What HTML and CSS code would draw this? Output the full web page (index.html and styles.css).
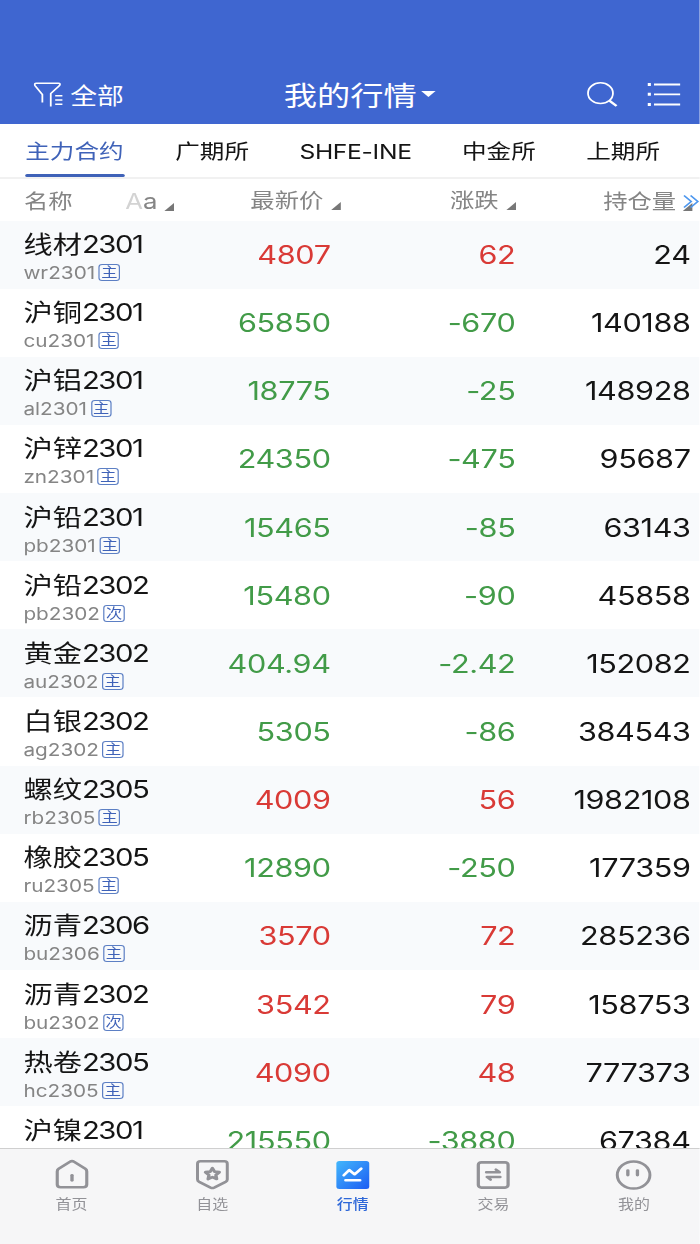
FILE: index.html
```
<!DOCTYPE html>
<html lang="zh-CN">
<head>
  <meta charset="UTF-8">
  <meta name="viewport" content="width=device-width, initial-scale=1.0">
  <title>我的行情</title>
  <link rel="stylesheet" href="styles.css">
</head>
<body>
  <div class="app">
    <header class="topbar">
      <div class="filter">
        <svg width="26" height="26" viewBox="0 0 26 26" fill="none" stroke="#fff" stroke-width="1.5">
          <path d="M7.3 21.5V13.5L1.2 4.6Q.2 2.3 2.4 2.3H20.6Q22.8 2.3 21.6 4.6L14.3 12.5V25.5M18 14.8H24M18 19H24M18 23.2H24"/>
        </svg>
        <span>全部</span>
      </div>
      <h1 class="title">我的行情<i class="caret"></i></h1>
      <div class="actions">
        <svg width="26" height="26" viewBox="0 0 26 26" fill="none" stroke="#fff" stroke-width="1.5">
          <circle cx="11.4" cy="12.2" r="10.4"/>
          <path d="M18.8 19.6L24.8 25" stroke-width="2.2"/>
        </svg>
        <svg width="28" height="26" viewBox="0 0 28 26" fill="none" stroke="#fff" stroke-width="1.8">
          <path d="M6 3.5H28M6 13.3H28M6 23.5H28"/>
          <path d="M.8 3.5H3.4M.8 13.3H3.4M.8 23.5H3.4" stroke-width="3"/>
        </svg>
      </div>
    </header>

    <nav class="tabs">
      <a class="tab active">主力合约</a>
      <a class="tab">广期所</a>
      <a class="tab latin">SHFE-INE</a>
      <a class="tab">中金所</a>
      <a class="tab">上期所</a>
    </nav>

    <div class="cols head">
      <div class="head-name">名称 <span class="aa"><b>A</b>a</span><i class="sort"></i></div>
      <div class="head-price">最新价<i class="sort"></i></div>
      <div>涨跌<i class="sort"></i></div>
      <div class="head-vol">持仓量
        <svg class="more" width="14" height="20" viewBox="0 0 14 20" fill="none">
          <path d="M8 11V19H0Z" fill="#777"/>
          <path d="M1 3.5L7 9.5L1 15.5M6.5 3.5L12.5 9.5L6.5 15.5" stroke="#4d97ee" stroke-width="1.5"/>
        </svg>
      </div>
    </div>

    <main class="list" id="list"></main>

    <footer class="navbar">
      <a class="nav-item">
        <svg width="30" height="34" viewBox="0 0 30 34" fill="none" stroke="#929297" stroke-width="2.6" stroke-linejoin="round" stroke-linecap="round">
          <path d="M13.3 3.8Q15 2.4 16.7 3.8L26.1 10.8Q27.3 11.8 27.3 13.5V26.5Q27.3 29.2 24.5 29.2H5.5Q2.7 29.2 2.7 26.5V13.5Q2.7 11.8 3.9 10.8Z"/>
          <path d="M15 17.3V22.3" stroke-width="2.8"/>
        </svg>
        <span>首页</span>
      </a>
      <a class="nav-item">
        <svg width="30" height="34" viewBox="0 0 30 34" fill="none" stroke="#929297" stroke-width="2.5" stroke-linejoin="round">
          <path d="M5 3.2H25Q27.4 3.2 27.4 5.7V21.5Q27.4 23 26 23.9L16.5 29.6Q15 30.4 13.5 29.6L4 23.9Q2.6 23 2.6 21.5V5.7Q2.6 3.2 5 3.2Z"/>
          <path d="M15 10.2L16.8 13.7L20.8 14.2L17.9 17L18.6 21L15 19.1L11.4 21L12.1 17L9.2 14.2L13.2 13.7Z" stroke-width="2.7"/>
        </svg>
        <span>自选</span>
      </a>
      <a class="nav-item current">
        <svg width="30" height="34" viewBox="0 0 30 34" fill="none">
          <defs>
            <linearGradient id="blue" x1="0" y1="0" x2="1" y2="1">
              <stop offset="0" stop-color="#42b7fc"/>
              <stop offset="1" stop-color="#1c5cf3"/>
            </linearGradient>
          </defs>
          <rect x="1.3" y="3" width="27.4" height="28" rx="2.5" fill="url(#blue)"/>
          <path d="M7.5 17.2L12 12L16.5 16.3L22 10.7M9 22.3H21" stroke="#fff" stroke-width="2.5" stroke-linecap="round" stroke-linejoin="round"/>
        </svg>
        <span>行情</span>
      </a>
      <a class="nav-item">
        <svg width="30" height="34" viewBox="0 0 30 34" fill="none" stroke="#929297" stroke-width="2.7" stroke-linejoin="round">
          <rect x="2.6" y="4.3" width="24.8" height="25.3" rx="2.5"/>
          <path d="M9.3 14.3H20.3L17.3 11.6M20.8 18.9H9.8L12.8 21.6" stroke-width="2.5" stroke-linecap="round"/>
        </svg>
        <span>交易</span>
      </a>
      <a class="nav-item">
        <svg width="32" height="34" viewBox="0 0 32 34" fill="none" stroke="#929297" stroke-width="2.5">
          <circle cx="16" cy="17" r="13.6"/>
          <path d="M11.2 12.6V17M19.2 12.6V17" stroke-width="2.8" stroke-linecap="round"/>
        </svg>
        <span>我的</span>
      </a>
    </footer>
  </div>

  <script>
    // name, month, code, tag, price, change, open interest
    const quotes = [
      ['线材', '2301', 'wr', '主', '4807', '62', '24'],
      ['沪铜', '2301', 'cu', '主', '65850', '-670', '140188'],
      ['沪铝', '2301', 'al', '主', '18775', '-25', '148928'],
      ['沪锌', '2301', 'zn', '主', '24350', '-475', '95687'],
      ['沪铅', '2301', 'pb', '主', '15465', '-85', '63143'],
      ['沪铅', '2302', 'pb', '次', '15480', '-90', '45858'],
      ['黄金', '2302', 'au', '主', '404.94', '-2.42', '152082'],
      ['白银', '2302', 'ag', '主', '5305', '-86', '384543'],
      ['螺纹', '2305', 'rb', '主', '4009', '56', '1982108'],
      ['橡胶', '2305', 'ru', '主', '12890', '-250', '177359'],
      ['沥青', '2306', 'bu', '主', '3570', '72', '285236'],
      ['沥青', '2302', 'bu', '次', '3542', '79', '158753'],
      ['热卷', '2305', 'hc', '主', '4090', '48', '777373'],
      ['沪镍', '2301', '', '', '215550', '-3880', '67384']
    ];

    document.getElementById('list').innerHTML = quotes.map(q => {
      const dir = q[5].startsWith('-') ? 'down' : 'up';
      const code = q[2] ? `${q[2]}${q[1]}<em>${q[3]}</em>` : '';
      return `<div class="cols row">
        <div class="name">
          <p>${q[0]}<span>${q[1]}</span></p>
          <small>${code}</small>
        </div>
        <div class="num ${dir}">${q[4]}</div>
        <div class="num ${dir}">${q[5]}</div>
        <div class="num">${q[6]}</div>
      </div>`;
    }).join('');
  </script>
</body>
</html>
```

FILE: styles.css
```
* {
  box-sizing: border-box;
  margin: 0;
  padding: 0;
}
html, body {
  height: 1244px;
  overflow: hidden;
}
body {
  width: 700px;
  background: #fff;
  font-family: Inter, "Noto Sans CJK SC", sans-serif;
  color: #151515;
}
/* wide glyphs and icons: everything is stretched sideways */
.app {
  width: 583.33px;
  height: 1244px;
  display: flex;
  flex-direction: column;
  transform: scaleX(1.2);
  transform-origin: 0 0;
}
svg {
  display: block;
  flex: none;
}

/* top bar */
.topbar {
  height: 124px;
  padding: 63px 16px 0 27.5px;
  background: #3f66d0;
  color: #fff;
  display: grid;
  grid-template-columns: 1fr auto 1fr;
  align-items: center;
}
.filter {
  display: flex;
  align-items: center;
  gap: 5px;
  font-size: 22.3px;
}
.filter svg {
  margin-top: 1px;
}
.title {
  font-size: 27.7px;
  font-weight: 400;
  display: flex;
  align-items: center;
  gap: 4px;
  margin-right: -5px;
}
.caret {
  border: 6.5px solid transparent;
  border-top: 6px solid #fff;
  border-bottom: 0;
}
.actions {
  display: flex;
  justify-content: flex-end;
  gap: 24px;
}

/* tabs */
.tabs {
  height: 55px;
  flex: none;
  padding: 0 21px;
  display: flex;
  gap: 42px;
  border-bottom: 2px solid #f1f1f1;
  font-size: 20.5px;
  line-height: 56px;
  white-space: nowrap;
}
.tab.active {
  width: 83px;
  color: #3f62b8;
  height: 53px;
  position: relative;
}
.tab.active::after {
  content: '';
  position: absolute;
  left: 0;
  right: 0;
  bottom: 0;
  height: 3.5px;
  border-radius: 2px;
  background: #3f62b8;
}
.tab.latin {
  letter-spacing: -0.25px;
}

/* table */
.cols {
  display: grid;
  grid-template-columns: 135.5px 120px 154px 146px;
  padding-left: 20px;
  text-align: right;
}
.head {
  height: 41.5px;
  flex: none;
  line-height: 44px;
  font-size: 20.3px;
  color: #858585;
}
.head-name {
  text-align: left;
  white-space: nowrap;
}
.head-price {
  margin-right: -8px;
}
.aa {
  margin-left: 38px;
  font-size: 21.5px;
}
.aa b {
  font-weight: 400;
  color: #d3d3d3;
}
.sort {
  display: inline-block;
  margin-left: 6px;
  border-left: 8px solid transparent;
  border-bottom: 8px solid #777;
  vertical-align: -2px;
}
.head-vol {
  display: flex;
  justify-content: flex-end;
  align-items: center;
  gap: 5px;
  margin-right: -7px;
}
.list {
  flex: 1;
  overflow: hidden;
}
.row {
  height: 68.15px;
  align-items: center;
}
.row:nth-child(odd) {
  background: #f8fafc;
}
.name {
  text-align: left;
  white-space: nowrap;
  padding-top: 4px;
  margin-left: -0.5px;
}
.name p {
  font-size: 24.4px;
  line-height: 32px;
}
.name p span {
  letter-spacing: -1.2px;
}
.name small {
  display: flex;
  align-items: center;
  gap: 3px;
  height: 25px;
  font-size: 17.3px;
  line-height: 25px;
  color: #858585;
}
.name em {
  width: 17.5px;
  height: 17px;
  border: 1px solid #5c7fc4;
  border-radius: 3px;
  color: #3f62b8;
  font-size: 13.5px;
  font-style: normal;
  line-height: 14px;
  text-align: center;
}
.num {
  font-size: 25.5px;
  letter-spacing: -0.3px;
}
.up {
  color: #d93a36;
}
.down {
  color: #429b48;
}

/* bottom bar */
.navbar {
  height: 96px;
  flex: none;
  padding: 9px 0 0 1px;
  background: #f6f6f7;
  border-top: 1px solid #cfcfcf;
  display: grid;
  grid-template-columns: repeat(5, 117.2px);
}
.nav-item {
  display: flex;
  flex-direction: column;
  align-items: center;
  font-size: 13.3px;
  line-height: 24px;
  color: #929297;
}
.current {
  color: #2f68d8;
  font-weight: 500;
}
```
